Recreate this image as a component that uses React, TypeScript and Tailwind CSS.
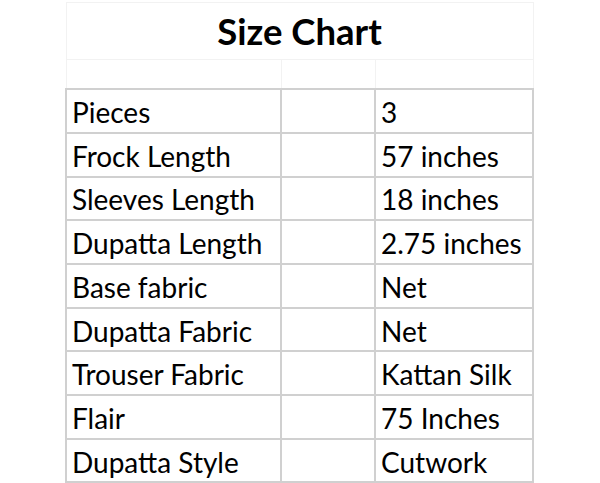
const rows: [string, string][] = [
  ["Pieces", "3"],
  ["Frock Length", "57 inches"],
  ["Sleeves Length", "18 inches"],
  ["Dupatta Length", "2.75 inches"],
  ["Base fabric", "Net"],
  ["Dupatta Fabric", "Net"],
  ["Trouser Fabric", "Kattan Silk"],
  ["Flair", "75 Inches"],
  ["Dupatta Style", "Cutwork"],
]

export default function App() {
  return (
    <div className="h-[483px] w-[600px] bg-white pt-[2px] pl-[65px] font-['Lato',sans-serif] text-black">
      <table className="border-collapse">
        <colgroup>
          <col className="w-[215px]" />
          <col className="w-[94px]" />
          <col className="w-[158px]" />
        </colgroup>
        <tbody>
          <tr className="h-[55px]">
            <td colSpan={3} className="border border-[#f2f2f2] pt-[1px] text-center text-[36.5px] font-bold">
              Size Chart
            </td>
          </tr>
          <tr className="h-[30px]">
            <td className="border border-[#f2f2f2]" />
            <td className="border border-[#f2f2f2]" />
            <td className="border border-[#f2f2f2]" />
          </tr>
          {rows.map(([label, value]) => (
            <tr key={label} className="h-[43.7px]">
              <td className="border-2 border-[#d0d0d0] px-[5px] pt-[2px] text-[28px] leading-none whitespace-nowrap">
                {label}
              </td>
              <td className="border-2 border-[#d0d0d0]" />
              <td className="border-2 border-[#d0d0d0] px-[5px] pt-[2px] text-[28px] leading-none whitespace-nowrap">
                {value}
              </td>
            </tr>
          ))}
        </tbody>
      </table>
    </div>
  )
}
